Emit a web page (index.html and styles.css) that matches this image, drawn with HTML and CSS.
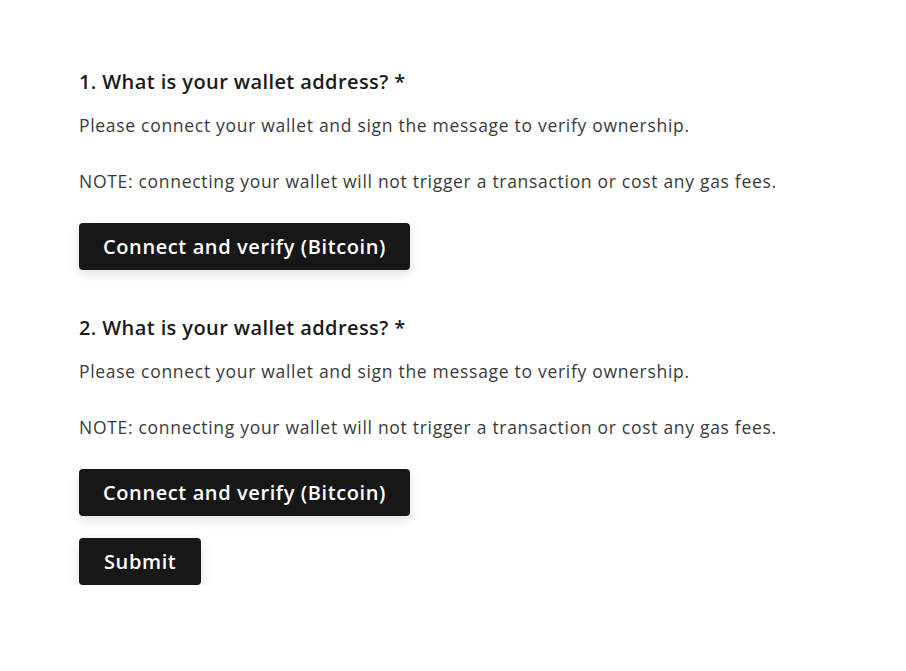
FILE: index.html
```html
<!DOCTYPE html>
<html>
<head>
<meta charset="utf-8">
<link rel="stylesheet" href="styles.css">
</head>
<body>
<form class="form">
  <section class="question">
    <h2 class="q-title">1. What is your wallet address? *</h2>
    <p class="q-text">Please connect your wallet and sign the message to verify ownership.</p>
    <p class="q-text">NOTE: connecting your wallet will not trigger a transaction or cost any gas fees.</p>
    <button type="button" class="btn">Connect and verify (Bitcoin)</button>
  </section>
  <section class="question">
    <h2 class="q-title">2. What is your wallet address? *</h2>
    <p class="q-text">Please connect your wallet and sign the message to verify ownership.</p>
    <p class="q-text">NOTE: connecting your wallet will not trigger a transaction or cost any gas fees.</p>
    <button type="button" class="btn">Connect and verify (Bitcoin)</button>
  </section>
  <button type="button" class="btn submit">Submit</button>
</form>
</body>
</html>
```
FILE: styles.css
```css
html, body {
  margin: 0;
  padding: 0;
  background: #ffffff;
}
body {
  font-family: "Open Sans", "Noto Sans", sans-serif;
  color: #333333;
}
.form {
  display: flex;
  flex-direction: column;
  align-items: flex-start;
  padding: 68px 0 0 79px;
}
.question {
  display: flex;
  flex-direction: column;
  align-items: flex-start;
  margin-bottom: 30px;
}
.question + .question {
  margin-top: 14px;
}
.q-title {
  margin: 0;
  font-size: 20px;
  line-height: 28px;
  font-weight: 600;
  letter-spacing: 0.4px;
  color: #1a1a1a;
}
.q-text {
  margin: 15px 0 0;
  font-size: 17.5px;
  line-height: 28px;
  letter-spacing: 0.7px;
  color: #3a3a3a;
}
.q-text + .q-text {
  margin-top: 28px;
}
.btn {
  margin-top: 28px;
  height: 47px;
  padding: 0 24px;
  border: none;
  border-radius: 4px;
  background: #171717;
  color: #ffffff;
  font-family: "Open Sans", "Noto Sans", sans-serif;
  font-size: 20px;
  font-weight: 600;
  letter-spacing: 0.6px;
  box-shadow: 0 4px 12px rgba(0, 0, 0, 0.12);
  cursor: pointer;
}
.submit {
  margin-top: -8px;
  padding: 0 25px;
}
```
